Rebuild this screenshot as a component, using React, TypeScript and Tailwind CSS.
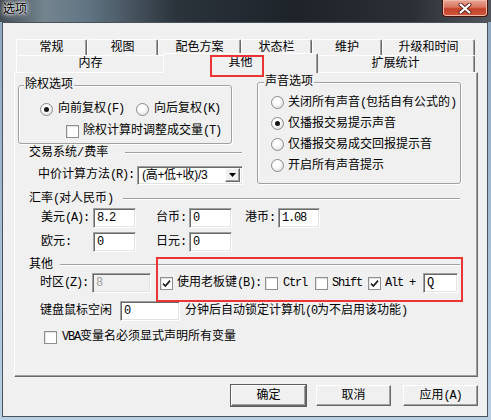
import React from "react";

// latin bits are squeezed to the half-width look of the original bitmap font
const L = ({ children }: { children: React.ReactNode }) => (
  <span className="tracking-[-1.2px]">{children}</span>
);

const Radio = ({ on }: { on?: boolean }) => (
  <span className="w-[13px] h-[13px] shrink-0 rounded-full border border-[#8b8b8b] bg-[radial-gradient(circle_at_40%_35%,#ffffff_30%,#d6d6d6)] flex items-center justify-center">
    {on && <span className="w-[5px] h-[5px] rounded-full bg-[#161616]" />}
  </span>
);

const Check = ({ on }: { on?: boolean }) => (
  <span className="w-[13px] h-[13px] shrink-0 border border-[#8e8f8f] bg-white shadow-[inset_1px_1px_0_#e2e2e2] flex items-center justify-center">
    {on && (
      <svg width="9" height="9" viewBox="0 0 9 9">
        <path d="M1 4.6L3.4 7L8 1.6" fill="none" stroke="#1e1e1e" strokeWidth="1.7" />
      </svg>
    )}
  </span>
);

const Edit = ({ className, value, off }: { className: string; value: string; off?: boolean }) => (
  <div
    className={`${className} h-[20px] shrink-0 flex items-center pl-[3px] border border-t-[#a0a0a0] border-l-[#a0a0a0] border-r-white border-b-white shadow-[inset_1px_1px_0_#696969,inset_-1px_-1px_0_#e3e3e3] ${
      off ? "bg-[#f0f0f0] text-[#a0a0a0]" : "bg-white"
    }`}
  >
    <L>{value}</L>
  </div>
);

const Sep = ({ title, tw, className }: { title: React.ReactNode; tw: string; className: string }) => (
  <div className={`h-[12px] flex items-center ${className}`}>
    <span className={`${tw} shrink-0 leading-[12px] whitespace-nowrap`}>{title}</span>
    <div className="flex-1 h-[2px] border-t border-t-[#a0a0a0] border-b border-b-white" />
  </div>
);

const Tab = ({ label, w }: { label: string; w: string }) => (
  <div
    className={`${w} h-full shrink-0 flex items-center justify-center bg-[#f0f0f0] border-t border-l border-white border-r border-r-[#696969] shadow-[inset_-1px_0_0_#a0a0a0] rounded-t-[2px]`}
  >
    {label}
  </div>
);

const Btn = ({ children, def, className }: { children: React.ReactNode; def?: boolean; className?: string }) => (
  <div
    className={`${className ?? ""} w-[75px] h-[21px] flex items-center justify-center bg-[#f0f0f0] border border-t-white border-l-white border-r-[#696969] border-b-[#696969] shadow-[inset_-1px_-1px_0_#a0a0a0] ${
      def ? "outline outline-[#5c5c5c]" : ""
    }`}
  >
    {children}
  </div>
);

export default function App() {
  return (
    <div className="w-[491px] h-[420px] overflow-hidden relative bg-[linear-gradient(180deg,#8ea7bf,#b8cfe4)] text-[12px] leading-[14px] text-black font-['Liberation_Mono','Noto_Sans_CJK_SC',monospace]">
      {/* title bar */}
      <div className="h-[22px] flex items-start bg-[linear-gradient(90deg,#434b54_0%,#74858f_9%,#617482_18%,#2b333b_36%,#1d2329_60%,#2a3036_84%,#52575d_100%)]">
        <span className="ml-[3px] mt-[4px] leading-[12px] [text-shadow:0_0_4px_#fff,0_0_7px_#fff,0_0_2px_#fff]">选项</span>
        <div className="ml-auto mr-[3px] w-[46px] h-[17px] rounded-b-[4px] border border-t-0 border-[#4a1208] bg-[linear-gradient(180deg,#e9a898_0%,#d8735e_45%,#c2412a_55%,#cf5a3e_100%)] shadow-[inset_0_0_0_1px_#f0b8a8] flex items-center justify-center">
          <svg width="14" height="11" viewBox="0 0 14 11">
            <path d="M2.5 1.5L11.5 9.5M11.5 1.5L2.5 9.5" stroke="#5a2018" strokeWidth="4" strokeLinecap="round" />
            <path d="M2.5 1.5L11.5 9.5M11.5 1.5L2.5 9.5" stroke="#ffffff" strokeWidth="2.2" strokeLinecap="round" />
          </svg>
        </div>
      </div>

      {/* client area */}
      <div className="ml-[2px] w-[486px] h-[395px] border border-[#4a525c] bg-[#f0f0f0] flex flex-col">
        <div className="ml-[11px] mt-[16px] w-[464px]">
          {/* back row of tabs */}
          <div className="h-[16px] flex pl-[2px]">
            <Tab label="常规" w="w-[71px]" />
            <Tab label="视图" w="w-[71px]" />
            <Tab label="配色方案" w="w-[83px]" />
            <Tab label="状态栏" w="w-[71px]" />
            <Tab label="维护" w="w-[70px]" />
            <Tab label="升级和时间" w="w-[93px]" />
          </div>
          {/* front row of tabs */}
          <div className="h-[17px] flex pl-[2px]">
            <Tab label="内存" w="w-[149px]" />
            <div className="-ml-[2px] -mr-[2px] -mt-[2px] w-[155px] h-[20px] shrink-0 relative z-10 flex items-start pt-[2px] justify-center bg-[#f0f0f0] border-t border-l border-white border-r border-r-[#696969] shadow-[inset_-1px_0_0_#a0a0a0] rounded-t-[2px]">
              其他
            </div>
            <Tab label="扩展统计" w="w-[159px]" />
          </div>

          {/* panel */}
          <div className="h-[305px] border-t border-l border-white border-r border-b border-r-[#696969] border-b-[#696969] shadow-[inset_-1px_-1px_0_#a0a0a0] flex flex-col">
            <div className="h-[112px] flex items-start">
              <div className="w-[229px] shrink-0 flex flex-col">
                <fieldset className="ml-[3px] mt-[6px] w-[214px] border border-[#a0a0a0] rounded-[3px] shadow-[inset_1px_1px_0_#fff,1px_1px_0_#fff] px-0">
                  <legend className="ml-[5px] px-[1px] leading-[12px] bg-[#f0f0f0]">除权选项</legend>
                  <div className="pt-[10px] pb-[4px]">
                    <div className="h-[16px] flex items-center pl-[21px]">
                      <div className="w-[96px] flex items-center gap-[5px]">
                        <Radio on />
                        <span className="whitespace-nowrap">向前复权<L>(F)</L></span>
                      </div>
                      <div className="flex items-center gap-[5px]">
                        <Radio />
                        <span className="whitespace-nowrap">向后复权<L>(K)</L></span>
                      </div>
                    </div>
                    <div className="h-[16px] mt-[6px] flex items-center gap-[4px] pl-[47px]">
                      <Check />
                      <span className="whitespace-nowrap">除权计算时调整成交量<L>(T)</L></span>
                    </div>
                  </div>
                </fieldset>

                <Sep title="交易系统/费率" tw="w-[96px]" className="mt-[3px] ml-[14px] mr-[2px]" />

                <div className="mt-[6px] h-[20px] flex items-center ml-[23px]">
                  <span className="w-[99px] shrink-0 whitespace-nowrap">中价计算方法<L>(R):</L></span>
                  <div className="w-[106px] h-[19px] shrink-0 flex items-center bg-white border border-t-[#a0a0a0] border-l-[#a0a0a0] border-r-white border-b-white shadow-[inset_1px_1px_0_#696969,inset_-1px_-1px_0_#e3e3e3] pl-[4px] pr-[2px]">
                    <span className="flex-1 font-['Liberation_Sans','Noto_Sans_CJK_SC',sans-serif] text-[12px] tracking-[-0.3px]">(高+低+收)/3</span>
                    <div className="w-[15px] h-[14px] flex items-center justify-center bg-[#f0f0f0] border border-t-white border-l-white border-r-[#696969] border-b-[#696969] shadow-[inset_-1px_-1px_0_#a0a0a0]">
                      <svg width="7" height="4" viewBox="0 0 7 4">
                        <path d="M0 0H7L3.5 4Z" fill="#000" />
                      </svg>
                    </div>
                  </div>
                </div>
              </div>

              <fieldset className="ml-[13px] mt-[3px] w-[204px] border border-[#a0a0a0] rounded-[3px] shadow-[inset_1px_1px_0_#fff,1px_1px_0_#fff] px-0">
                <legend className="ml-[6px] px-[1px] leading-[12px] bg-[#f0f0f0]">声音选项</legend>
                <div className="pt-[4px] pb-[7px] pl-[13px]">
                  <div className="h-[21px] flex items-center gap-[4px]">
                    <Radio />
                    <span className="whitespace-nowrap">关闭所有声音<L>(</L>包括自有公式的<L>)</L></span>
                  </div>
                  <div className="h-[21px] flex items-center gap-[4px]">
                    <Radio on />
                    <span>仅播报交易提示声音</span>
                  </div>
                  <div className="h-[21px] flex items-center gap-[4px]">
                    <Radio />
                    <span>仅播报交易成交回报提示音</span>
                  </div>
                  <div className="h-[21px] flex items-center gap-[4px]">
                    <Radio />
                    <span>开启所有声音提示</span>
                  </div>
                </div>
              </fieldset>
            </div>

            <Sep
              title={<>汇率<L>(</L>对人民币<L>)</L></>}
              tw="w-[94px]"
              className="mt-[8px] ml-[14px] mr-[17px]"
            />
            <div className="mt-[3px] h-[20px] flex items-center ml-[26px]">
              <span className="w-[52px] shrink-0 whitespace-nowrap">美元<L>(A):</L></span>
              <Edit className="w-[43px]" value="8.2" />
              <span className="ml-[20px] w-[33px] shrink-0">台币<L>:</L></span>
              <Edit className="w-[43px]" value="0" />
              <span className="ml-[13px] w-[33px] shrink-0">港币<L>:</L></span>
              <Edit className="w-[42px]" value="1.08" />
            </div>
            <div className="mt-[4px] h-[20px] flex items-center ml-[26px]">
              <span className="w-[52px] shrink-0">欧元<L>:</L></span>
              <Edit className="w-[43px]" value="0" />
              <span className="ml-[20px] w-[33px] shrink-0">日元<L>:</L></span>
              <Edit className="w-[43px]" value="0" />
            </div>

            <Sep title="其他" tw="w-[31px]" className="mt-[7px] ml-[14px] mr-[17px]" />
            <div className="mt-[2px] h-[20px] flex items-center ml-[25px]">
              <span className="w-[52px] shrink-0 whitespace-nowrap">时区<L>(Z):</L></span>
              <Edit className="w-[59px]" value="8" off />
              <span className="ml-[9px]"><Check on /></span>
              <span className="ml-[4px] w-[88px] shrink-0 whitespace-nowrap">使用老板键<L>(B):</L></span>
              <Check />
              <span className="ml-[5px] w-[32px] shrink-0"><L>Ctrl</L></span>
              <Check />
              <span className="ml-[4px] w-[36px] shrink-0"><L>Shift</L></span>
              <Check on />
              <span className="ml-[4px] w-[38px] shrink-0 whitespace-pre"><L>Alt +</L></span>
              <Edit className="w-[35px]" value="Q" />
            </div>
            <div className="mt-[8px] h-[20px] flex items-center ml-[25px]">
              <span className="w-[80px] shrink-0">键盘鼠标空闲</span>
              <Edit className="w-[60px]" value="0" />
              <span className="ml-[5px] whitespace-nowrap">分钟后自动锁定计算机<L>(0</L>为不启用该功能<L>)</L></span>
            </div>
            <div className="mt-[8px] h-[16px] flex items-center gap-[5px] ml-[29px]">
              <Check />
              <span className="whitespace-nowrap"><L>VBA</L>变量名必须显式声明所有变量</span>
            </div>
          </div>
        </div>

        {/* dialog buttons */}
        <div className="mt-[8px] flex justify-end pr-[9px]">
          <Btn def>确定</Btn>
          <Btn className="ml-[10px]">取消</Btn>
          <Btn className="ml-[12px]">应用<L>(A)</L></Btn>
        </div>
      </div>

      {/* red annotation boxes */}
      <div className="absolute z-20 left-[210px] top-[55px] w-[54px] h-[22px] border-2 border-[#ec3434] pointer-events-none" />
      <div className="absolute z-20 left-[156px] top-[257px] w-[307px] h-[45px] border-2 border-[#ec3434] pointer-events-none" />
    </div>
  );
}
